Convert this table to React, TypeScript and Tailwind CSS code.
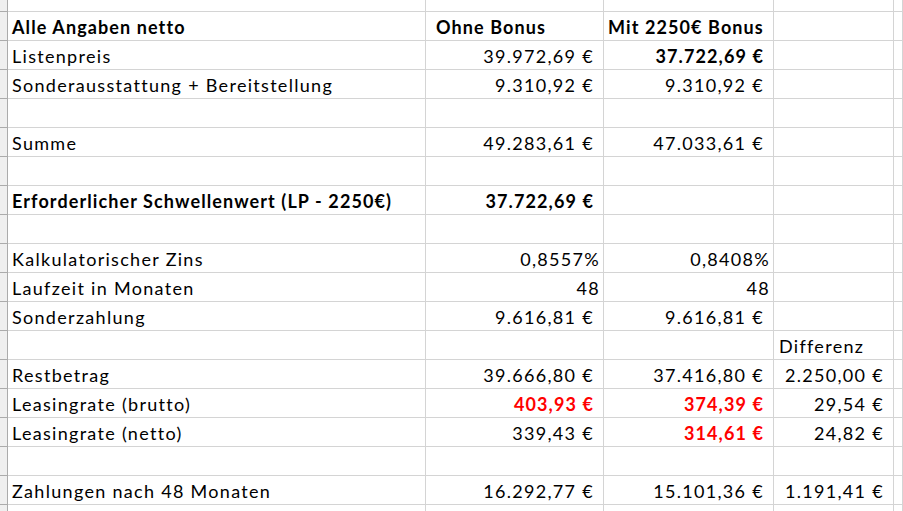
import React from "react";

type Cell = {
  t?: string;
  b?: boolean;
  red?: boolean;
  align?: "l" | "r";
  cur?: boolean;
  pl?: string;
};

const E: Cell = {};

const rows: Cell[][] = [
  [
    { t: "Alle Angaben netto", b: true },
    { t: "Ohne Bonus", b: true, pl: "pl-[10px]" },
    { t: "Mit 2250€ Bonus", b: true },
    E,
  ],
  [
    { t: "Listenpreis" },
    { t: "39.972,69 €", align: "r", cur: true },
    { t: "37.722,69 €", align: "r", cur: true, b: true },
    E,
  ],
  [
    { t: "Sonderausstattung + Bereitstellung" },
    { t: "9.310,92 €", align: "r", cur: true },
    { t: "9.310,92 €", align: "r", cur: true },
    E,
  ],
  [E, E, E, E],
  [
    { t: "Summe" },
    { t: "49.283,61 €", align: "r", cur: true },
    { t: "47.033,61 €", align: "r", cur: true },
    E,
  ],
  [E, E, E, E],
  [
    { t: "Erforderlicher Schwellenwert (LP - 2250€)", b: true },
    { t: "37.722,69 €", align: "r", cur: true, b: true },
    E,
    E,
  ],
  [E, E, E, E],
  [
    { t: "Kalkulatorischer Zins" },
    { t: "0,8557%", align: "r" },
    { t: "0,8408%", align: "r" },
    E,
  ],
  [
    { t: "Laufzeit in Monaten" },
    { t: "48", align: "r" },
    { t: "48", align: "r" },
    E,
  ],
  [
    { t: "Sonderzahlung" },
    { t: "9.616,81 €", align: "r", cur: true },
    { t: "9.616,81 €", align: "r", cur: true },
    E,
  ],
  [E, E, E, { t: "Differenz", pl: "pl-[5px]" }],
  [
    { t: "Restbetrag" },
    { t: "39.666,80 €", align: "r", cur: true },
    { t: "37.416,80 €", align: "r", cur: true },
    { t: "2.250,00 €", align: "r", cur: true },
  ],
  [
    { t: "Leasingrate (brutto)" },
    { t: "403,93 €", align: "r", cur: true, b: true, red: true },
    { t: "374,39 €", align: "r", cur: true, b: true, red: true },
    { t: "29,54 €", align: "r", cur: true },
  ],
  [
    { t: "Leasingrate (netto)" },
    { t: "339,43 €", align: "r", cur: true },
    { t: "314,61 €", align: "r", cur: true, b: true, red: true },
    { t: "24,82 €", align: "r", cur: true },
  ],
  [E, E, E, E],
  [
    { t: "Zahlungen nach 48 Monaten" },
    { t: "16.292,77 €", align: "r", cur: true },
    { t: "15.101,36 €", align: "r", cur: true },
    { t: "1.191,41 €", align: "r", cur: true },
  ],
];

function DataCell({ c }: { c: Cell }) {
  const align = c.align === "r" ? "justify-end" : "justify-start";
  const pad =
    c.align === "r" ? (c.cur ? "pr-[9px]" : "pr-[3px]") : c.pl ?? "pl-[4px]";
  return (
    <div
      className={`h-[29px] border-r border-b border-[#d4d4d4] flex ${align} ${pad} pt-[1px] overflow-hidden`}
    >
      {c.t ? (
        <span
          className={`whitespace-nowrap leading-[28px] ${
            c.b ? "font-bold tracking-[1.1px]" : "font-normal tracking-[1.3px]"
          } ${c.red ? "text-[#ff0000]" : "text-black"}`}
        >
          {c.t}
        </span>
      ) : null}
    </div>
  );
}

function HeaderCell({ h }: { h: string }) {
  return <div className={`${h} bg-[#efefef] border-r border-b border-[#ababab]`} />;
}

function BlankCell({ h }: { h: string }) {
  return <div className={`${h} border-r border-b border-[#d4d4d4]`} />;
}

export default function App() {
  return (
    <div className="w-[903px] h-[511px] overflow-hidden bg-white font-['Lato',sans-serif] text-[18px]">
      <div className="grid grid-cols-[8px_418px_178px_170px_120px_9px]">
        <HeaderCell h="h-[12px]" />
        <BlankCell h="h-[12px]" />
        <BlankCell h="h-[12px]" />
        <BlankCell h="h-[12px]" />
        <BlankCell h="h-[12px]" />
        <BlankCell h="h-[12px]" />
        {rows.map((r, i) => (
          <React.Fragment key={i}>
            <HeaderCell h="h-[29px]" />
            {r.map((c, j) => (
              <DataCell key={j} c={c} />
            ))}
            <BlankCell h="h-[29px]" />
          </React.Fragment>
        ))}
        <HeaderCell h="h-[29px]" />
        <BlankCell h="h-[29px]" />
        <BlankCell h="h-[29px]" />
        <BlankCell h="h-[29px]" />
        <BlankCell h="h-[29px]" />
        <BlankCell h="h-[29px]" />
      </div>
    </div>
  );
}
